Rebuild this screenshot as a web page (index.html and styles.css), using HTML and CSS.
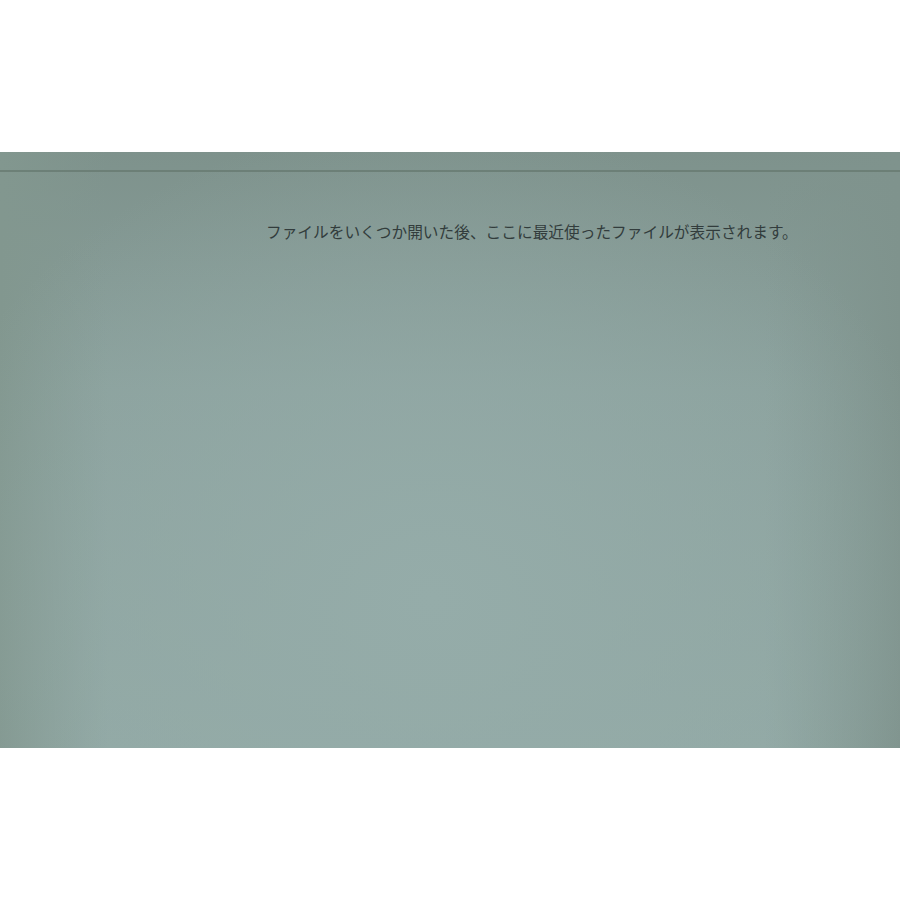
FILE: index.html
```html
<!DOCTYPE html>
<html lang="ja">
<head>
<meta charset="utf-8">
<title>最近使ったファイル</title>
<link rel="stylesheet" href="styles.css">
</head>
<body>
	<div class="screen">
		<div class="toolbar"></div>
		<div class="recent">
			<p class="empty-msg">ファイルをいくつか開いた後、ここに最近使ったファイルが表示されます。</p>
		</div>
	</div>
</body>
</html>
```
FILE: styles.css
```css
* {
	margin: 0;
	padding: 0;
	box-sizing: border-box;
}

body {
	background-color: #fff;
	font-family: "Noto Sans CJK JP", "Noto Sans", sans-serif;
}

.screen {
	margin-top: 152px;
	height: 596px;
	background-color: #8ca19d;
	background-image:
		radial-gradient(ellipse 60% 80% at 48% 75%, #95aca9 0%, rgba(149, 172, 169, 0) 100%),
		linear-gradient(to right, #82978f 0%, rgba(130, 151, 143, 0) 12%, rgba(130, 151, 143, 0) 85%, #7f938d 100%),
		linear-gradient(to bottom, #7e928c 0%, #8ba19d 40%, #92a9a5 100%);
}

.toolbar {
	height: 20px;
	border-bottom: 2px solid #66786f;
	opacity: 0.75;
}

.recent {
	padding-top: 49px;
	padding-left: 266px;
}

.empty-msg {
	font-size: 15.7px;
	line-height: 22px;
	color: #323c3c;
}
```
